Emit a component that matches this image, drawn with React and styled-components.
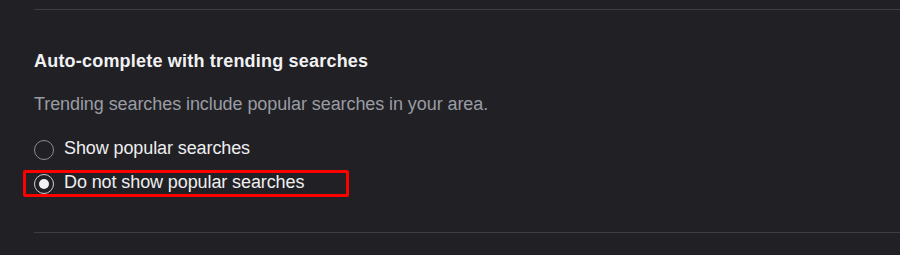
import React from 'react';
import styled, { createGlobalStyle } from 'styled-components';

const GlobalStyle = createGlobalStyle`
  html, body {
    margin: 0;
    padding: 0;
    background: #212125;
  }
  body {
    font-family: 'Liberation Sans', Arial, sans-serif;
  }
`;

const options = [
  { id: 'show', label: 'Show popular searches' },
  { id: 'hide', label: 'Do not show popular searches' },
];

function App() {
  const selected = 'hide';

  return (
    <>
      <GlobalStyle />
      <Page>
        <Divider $top={9} />
        <Heading>Auto-complete with trending searches</Heading>
        <Description>Trending searches include popular searches in your area.</Description>
        <RadioGroup>
          {options.map((o) => (
            <RadioRow key={o.id}>
              <RadioCircle $checked={selected === o.id} />
              <RadioLabel>{o.label}</RadioLabel>
              {selected === o.id && <Highlight />}
            </RadioRow>
          ))}
        </RadioGroup>
        <Divider $top={36} />
      </Page>
    </>
  );
}

export default App;

const Page = styled.div`
  width: 900px;
  height: 255px;
  padding-left: 34px;
  box-sizing: border-box;
  background: #212125;
  overflow: hidden;
`;

const Divider = styled.div`
  height: 1px;
  margin-top: ${(p) => p.$top}px;
  background: #3d3d42;
`;

const Heading = styled.h2`
  margin: 41px 0 0;
  font-size: 18px;
  line-height: 20px;
  font-weight: 700;
  letter-spacing: 0.2px;
  color: #f1f1f3;
`;

const Description = styled.p`
  margin: 23px 0 0;
  font-size: 18px;
  line-height: 20px;
  letter-spacing: -0.08px;
  color: #9a9ca4;
`;

const RadioGroup = styled.div`
  display: flex;
  flex-direction: column;
  gap: 10px;
  margin-top: 24px;
`;

const RadioRow = styled.label`
  position: relative;
  display: flex;
  align-items: center;
  height: 24px;
  gap: 10px;
`;

const RadioCircle = styled.span`
  position: relative;
  width: 20px;
  height: 20px;
  box-sizing: border-box;
  border-radius: 50%;
  border: 1px solid ${(p) => (p.$checked ? '#d0d0d4' : '#8c8c92')};
  flex-shrink: 0;

  &::after {
    content: '';
    display: ${(p) => (p.$checked ? 'block' : 'none')};
    position: absolute;
    left: 4px;
    top: 4px;
    width: 10px;
    height: 10px;
    border-radius: 50%;
    background: #f1f1f3;
  }
`;

const RadioLabel = styled.span`
  font-size: 18px;
  line-height: 20px;
  letter-spacing: -0.1px;
  color: #eeeef0;
  margin-top: -4px;
`;

const Highlight = styled.span`
  position: absolute;
  left: -11px;
  top: -2px;
  width: 326px;
  height: 27px;
  box-sizing: border-box;
  border: 3px solid #ff0000;
  border-radius: 2px;
  pointer-events: none;
`;
